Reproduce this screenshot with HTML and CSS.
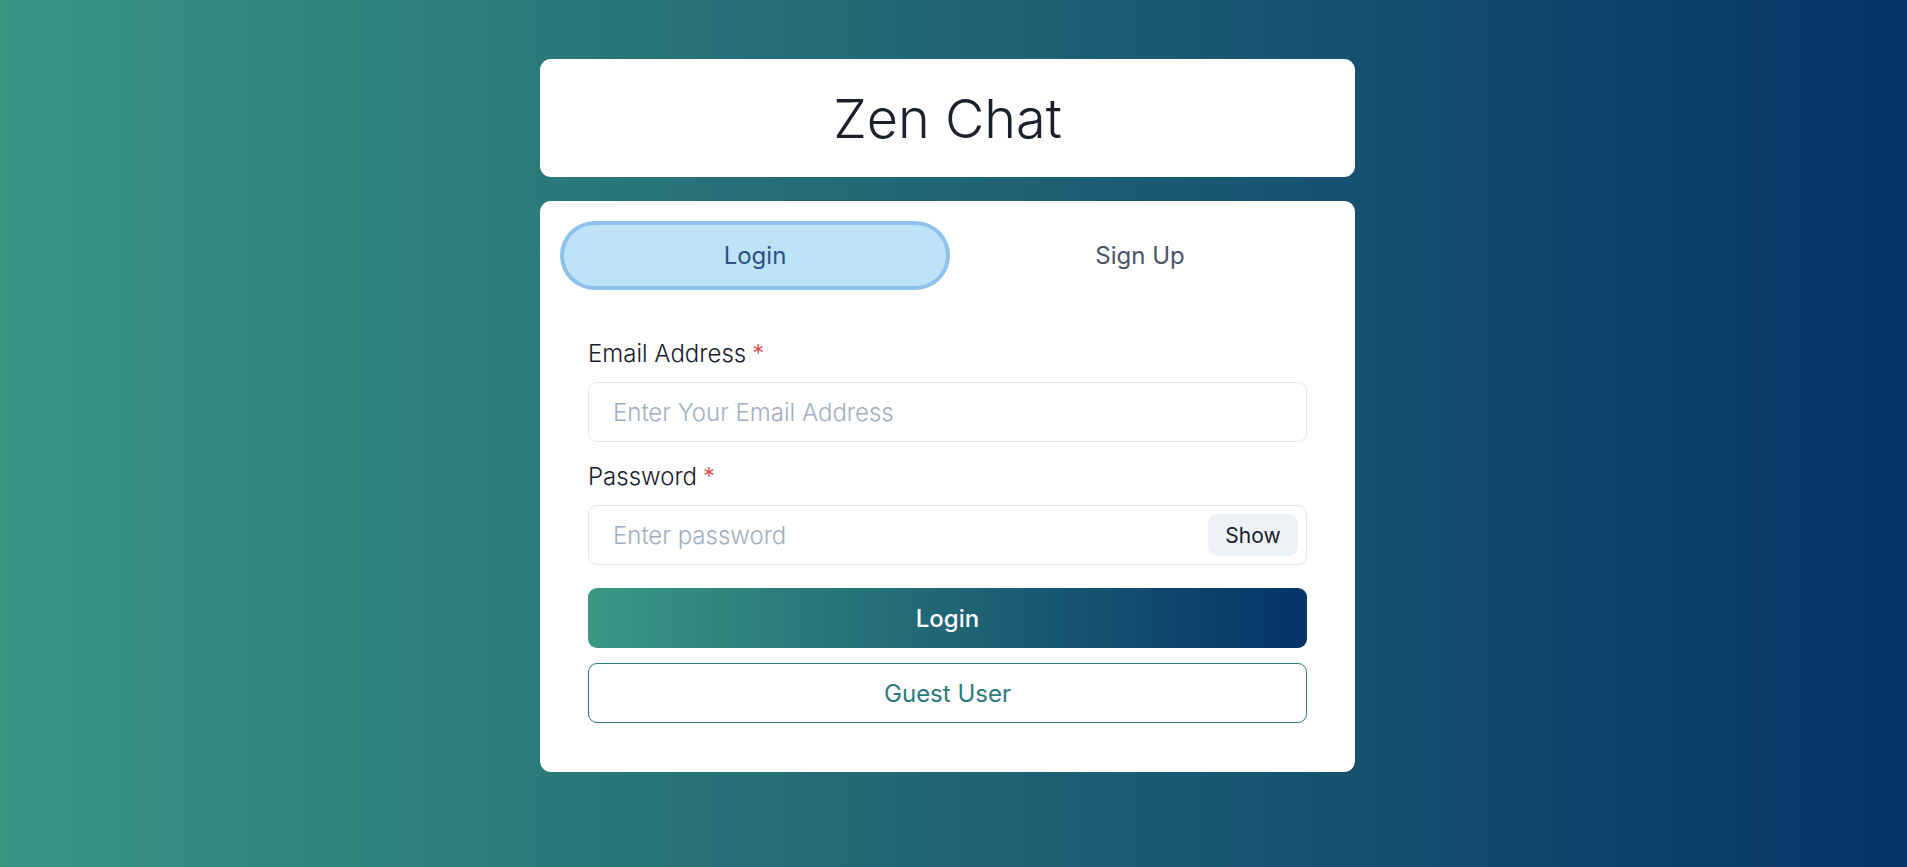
FILE: index.html
```html
<!DOCTYPE html>
<html lang="en">
<head>
<meta charset="utf-8">
<title>Zen Chat</title>
<link rel="stylesheet" href="styles.css">
</head>
<body>
<div class="page">
  <div class="container">
    <header class="brand-card">
      <h1 class="brand-title">Zen Chat</h1>
    </header>
    <main class="auth-card">
      <div class="tabs">
        <button class="tab tab-selected">Login</button>
        <button class="tab">Sign Up</button>
      </div>
      <form class="panel">
        <div class="field">
          <label class="field-label">Email Address<span class="req">*</span></label>
          <div class="input-box">
            <input class="input" type="email" placeholder="Enter Your Email Address">
          </div>
        </div>
        <div class="field field-password">
          <label class="field-label">Password<span class="req">*</span></label>
          <div class="input-box input-group">
            <input class="input" type="password" placeholder="Enter password">
            <button type="button" class="show-btn">Show</button>
          </div>
        </div>
        <button type="button" class="btn-primary">Login</button>
        <button type="button" class="btn-outline">Guest User</button>
      </form>
    </main>
  </div>
</div>
</body>
</html>
```

FILE: styles.css
```css
* { box-sizing: border-box; }

html, body {
  margin: 0;
  padding: 0;
}

body {
  font-family: Inter, "Open Sans", "Liberation Sans", sans-serif;
  color: #1a202c;
  background: linear-gradient(to right, #399683, #063467);
  min-height: 100vh;
}

.page {
  display: flex;
  justify-content: center;
  padding-right: 12px;
  min-height: 867px;
}

.container {
  width: 815px;
  display: flex;
  flex-direction: column;
}

.brand-card {
  margin-top: 59px;
  height: 118px;
  background: #fff;
  border-radius: 11px;
  display: flex;
  align-items: center;
  justify-content: center;
}

.brand-title {
  margin: 0;
  font-size: 54px;
  font-weight: 300;
  line-height: 1;
  color: #1a202c;
  position: relative;
  top: 1px;
}

.auth-card {
  margin-top: 24px;
  background: #fff;
  border-radius: 11px;
  padding: 24px 24px 49px;
}

.tabs {
  display: flex;
}

.tab {
  flex: 1;
  height: 61px;
  border: none;
  background: transparent;
  border-radius: 31px;
  font-family: inherit;
  font-size: 24px;
  font-weight: 400;
  color: #4a5568;
  cursor: pointer;
}

.tab-selected {
  background: #bee3f8;
  color: #2c5282;
  box-shadow: 0 0 0 4px #8ec2ed;
  margin-right: 3px;
}

.panel {
  padding: 50px 24px 0;
  display: flex;
  flex-direction: column;
}

.field {
  display: flex;
  flex-direction: column;
}

.field-password {
  margin-top: 17px;
}

.field-label {
  font-size: 24px;
  line-height: 36px;
  font-weight: 300;
  color: #1a202c;
  margin-bottom: 10px;
}

.req {
  color: #e53e3e;
  margin-left: 6px;
}

.input-box {
  height: 60px;
  border: 1px solid #e2e8f0;
  border-radius: 9px;
  display: flex;
  align-items: center;
}

.input {
  flex: 1;
  height: 100%;
  border: none;
  outline: none;
  background: transparent;
  padding: 0 24px;
  font-family: inherit;
  font-size: 24px;
  font-weight: 300;
  color: #1a202c;
  border-radius: 9px;
}

.input::placeholder {
  color: #a0aec0;
}

.input-group {
  padding-right: 8px;
}

.show-btn {
  width: 90px;
  height: 42px;
  border: none;
  border-radius: 9px;
  background: #edf2f7;
  font-family: inherit;
  font-size: 21px;
  font-weight: 400;
  color: #1a202c;
  cursor: pointer;
}

.btn-primary {
  margin-top: 23px;
  height: 60px;
  border: none;
  border-radius: 9px;
  background: linear-gradient(to right, #3a9884, #053468);
  color: #fff;
  font-family: inherit;
  font-size: 24px;
  font-weight: 500;
  cursor: pointer;
}

.btn-outline {
  margin-top: 15px;
  height: 60px;
  border: 1.5px solid #2c7a7b;
  border-radius: 9px;
  background: #fff;
  color: #2c7a7b;
  font-family: inherit;
  font-size: 24px;
  font-weight: 400;
  cursor: pointer;
}
```
